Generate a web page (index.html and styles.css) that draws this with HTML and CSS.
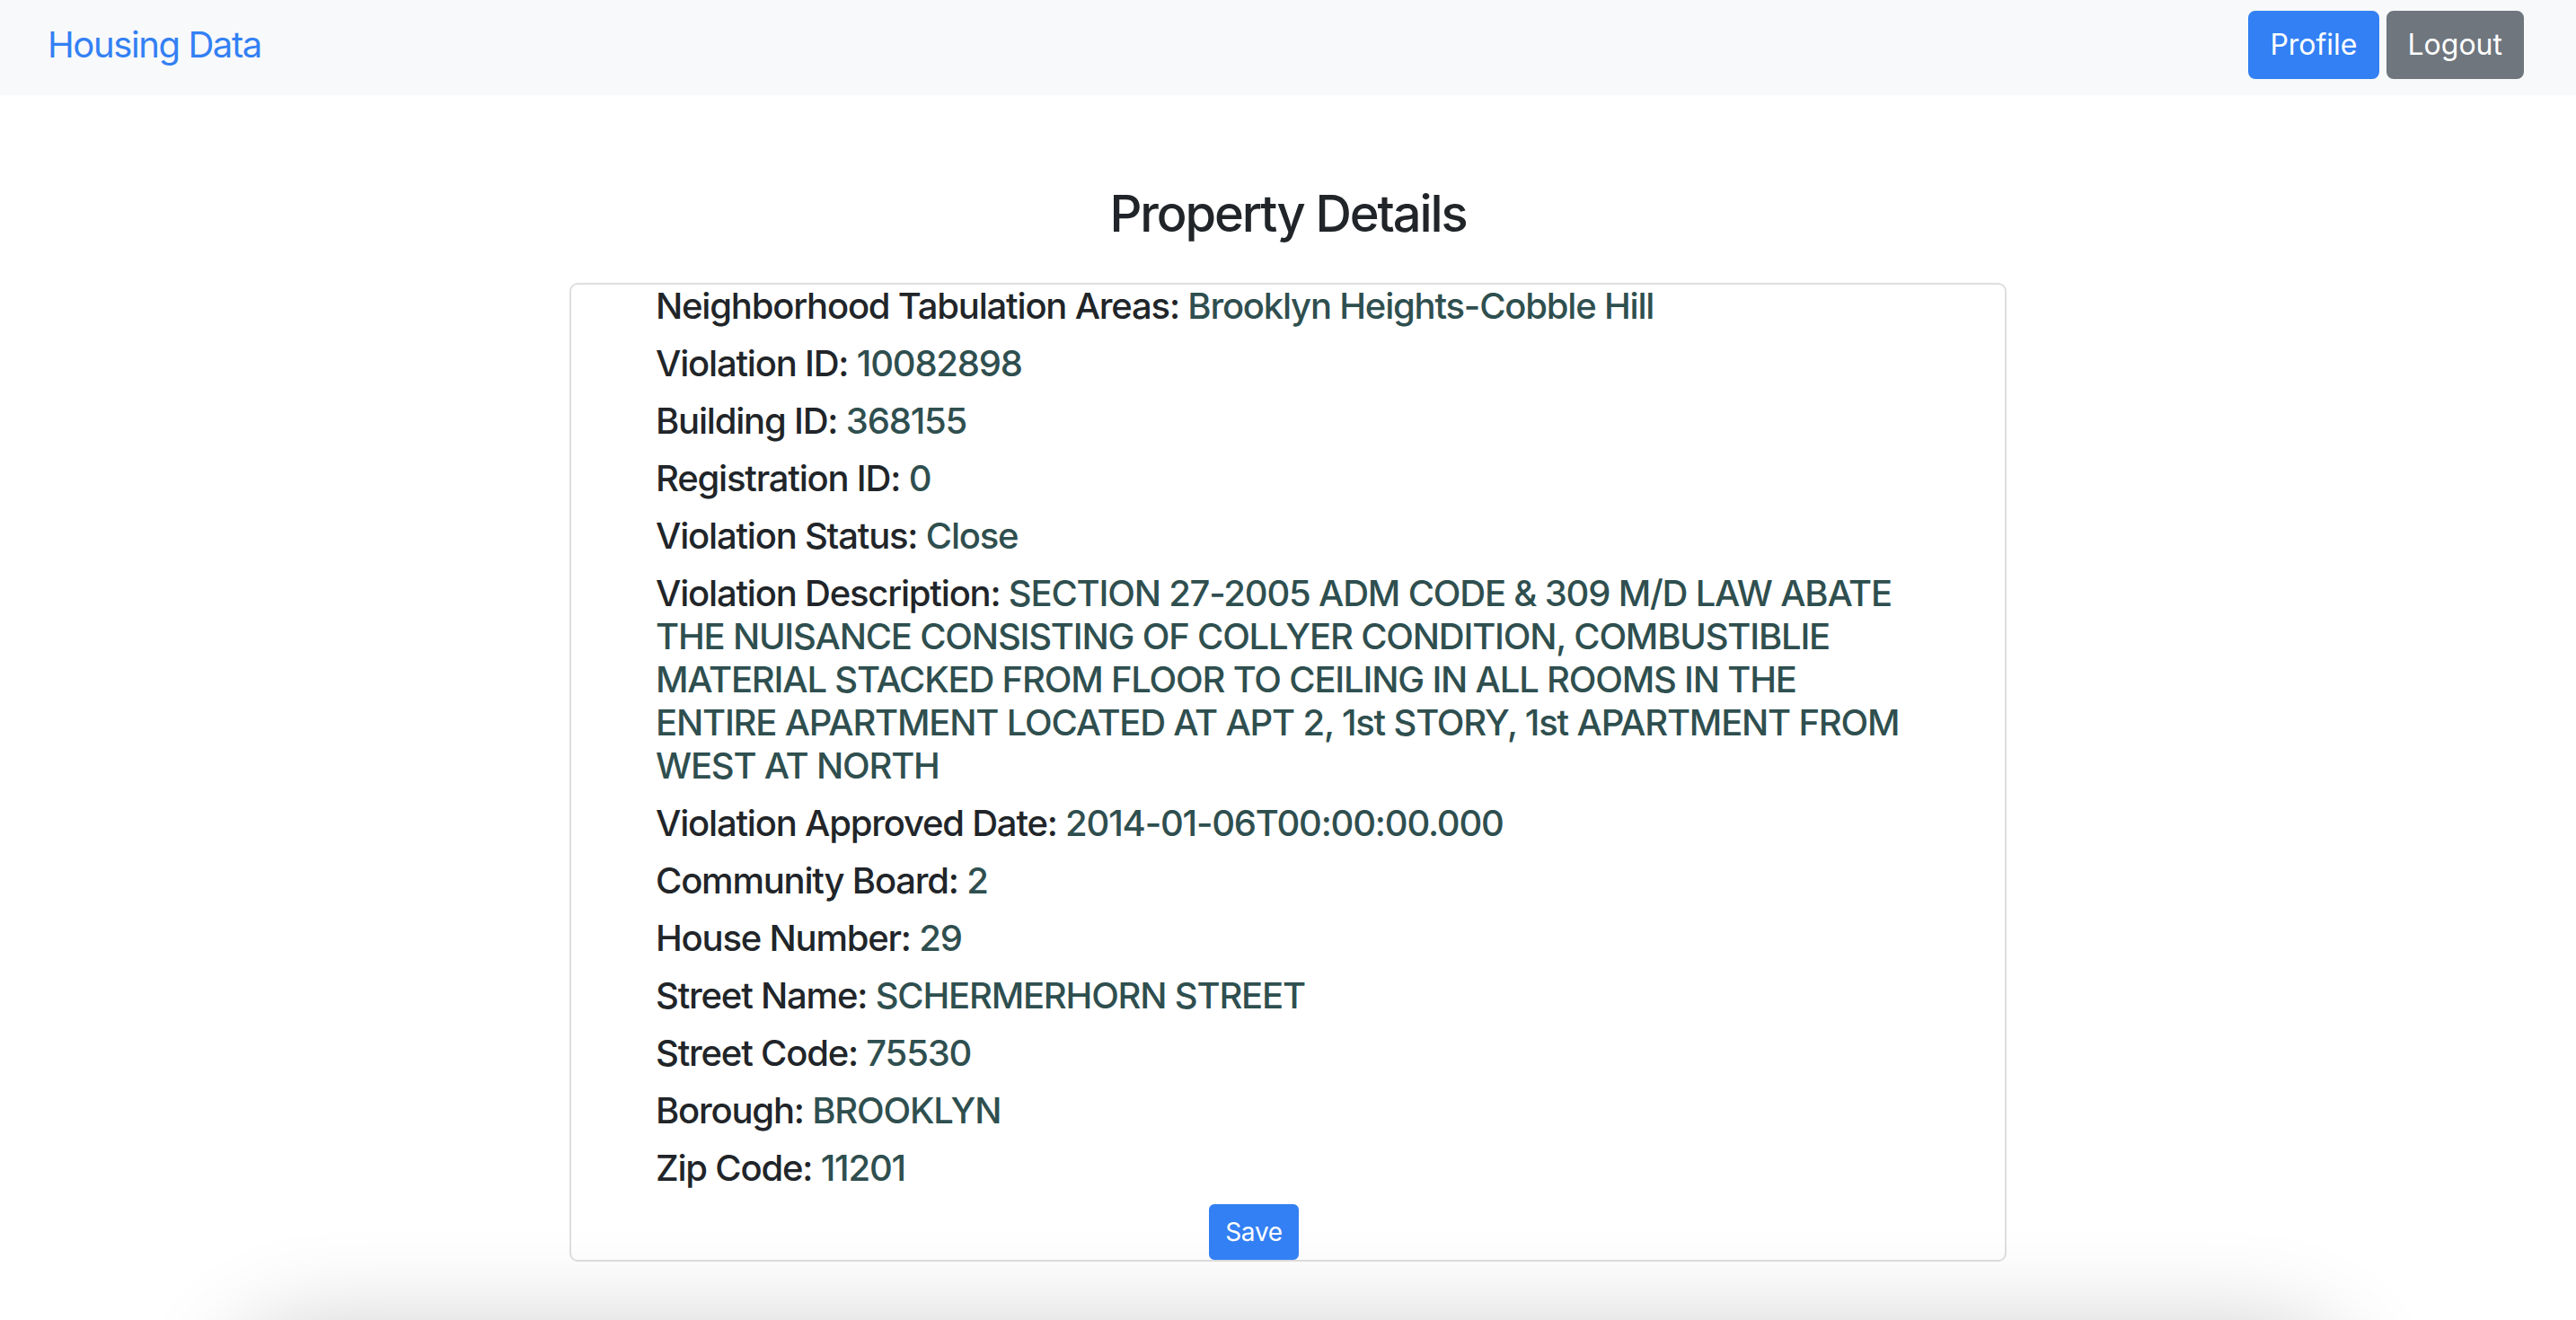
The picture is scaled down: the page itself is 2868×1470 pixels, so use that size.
FILE: index.html
```html
<!DOCTYPE html>
<html lang="en">
<head>
<meta charset="utf-8">
<title>Housing Data</title>
<link rel="stylesheet" href="styles.css">
</head>
<body>
<nav class="navbar">
  <a class="brand" href="#">Housing Data</a>
  <div class="nav-actions">
    <button class="btn btn-primary">Profile</button>
    <button class="btn btn-secondary">Logout</button>
  </div>
</nav>
<main class="container">
  <h3 class="title">Property Details</h3>
  <div class="card">
    <div class="details">
      <h5 class="row"><span class="label">Neighborhood Tabulation Areas:</span> <span class="value">Brooklyn Heights-Cobble Hill</span></h5>
      <h5 class="row"><span class="label">Violation ID:</span> <span class="value">10082898</span></h5>
      <h5 class="row"><span class="label">Building ID:</span> <span class="value">368155</span></h5>
      <h5 class="row"><span class="label">Registration ID:</span> <span class="value">0</span></h5>
      <h5 class="row"><span class="label">Violation Status:</span> <span class="value">Close</span></h5>
      <h5 class="row"><span class="label">Violation Description:</span> <span class="value">SECTION 27-2005 ADM CODE &amp; 309 M/D LAW ABATE THE NUISANCE CONSISTING OF COLLYER CONDITION, COMBUSTIBLIE MATERIAL STACKED FROM FLOOR TO CEILING IN ALL ROOMS IN THE ENTIRE APARTMENT LOCATED AT APT 2, 1st STORY, 1st APARTMENT FROM WEST AT NORTH</span></h5>
      <h5 class="row"><span class="label">Violation Approved Date:</span> <span class="value">2014-01-06T00:00:00.000</span></h5>
      <h5 class="row"><span class="label">Community Board:</span> <span class="value">2</span></h5>
      <h5 class="row"><span class="label">House Number:</span> <span class="value">29</span></h5>
      <h5 class="row"><span class="label">Street Name:</span> <span class="value">SCHERMERHORN STREET</span></h5>
      <h5 class="row"><span class="label">Street Code:</span> <span class="value">75530</span></h5>
      <h5 class="row"><span class="label">Borough:</span> <span class="value">BROOKLYN</span></h5>
      <h5 class="row"><span class="label">Zip Code:</span> <span class="value">11201</span></h5>
    </div>
    <div class="actions">
      <button class="btn btn-primary btn-sm">Save</button>
    </div>
  </div>
</main>
<div class="page-shadow"></div>
</body>
</html>
```
FILE: styles.css
```css
html, body {
  margin: 0;
  padding: 0;
  background: #ffffff;
}

body {
  font-family: Inter, "Noto Sans", "Liberation Sans", sans-serif;
  color: #212529;
}

.navbar {
  display: flex;
  justify-content: space-between;
  align-items: center;
  height: 106px;
  box-sizing: border-box;
  padding: 0 58px 6px 53px;
  background: #f8f9fa;
}

.brand {
  font-size: 40px;
  line-height: 60px;
  color: #3380f4;
  text-decoration: none;
  letter-spacing: -1.4px;
}

.nav-actions {
  display: flex;
  gap: 8px;
}

.btn {
  font-family: inherit;
  font-size: 32px;
  line-height: 48px;
  font-weight: 400;
  padding: 12px 22px;
  border: 2px solid transparent;
  border-radius: 8px;
  color: #ffffff;
  cursor: pointer;
  letter-spacing: 0;
}

.btn-primary {
  background: #3380f4;
  border-color: #3380f4;
}

.btn-secondary {
  background: #6f767e;
  border-color: #6f767e;
}

.btn-sm {
  font-size: 28px;
  line-height: 42px;
  padding: 8px 16px;
  border-radius: 6px;
  letter-spacing: -0.3px;
}

.container {
  display: block;
}

.title {
  margin: 99px 0 43px;
  font-size: 56px;
  line-height: 67px;
  font-weight: 500;
  text-align: center;
  color: #212529;
  letter-spacing: -2.1px;
}

.card {
  width: 1600px;
  box-sizing: border-box;
  margin: 0 auto;
  border: 2px solid #dfdfdf;
  border-radius: 9px;
  background: #ffffff;
}

.details {
  padding: 0 97px 0 94px;
}

.row {
  margin: 0 0 16px;
  font-size: 40px;
  line-height: 48px;
  font-weight: 500;
  color: #212529;
  letter-spacing: -1.2px;
}

.value {
  color: #2f4f4f;
}

.actions {
  display: flex;
  justify-content: center;
  padding-right: 76px;
}

.page-shadow {
  width: 2370px;
  height: 200px;
  margin: 72px auto 0;
  background: #ffffff;
  border-radius: 120px;
  box-shadow: 0 0 110px rgba(0, 0, 0, 0.2);
}
```
